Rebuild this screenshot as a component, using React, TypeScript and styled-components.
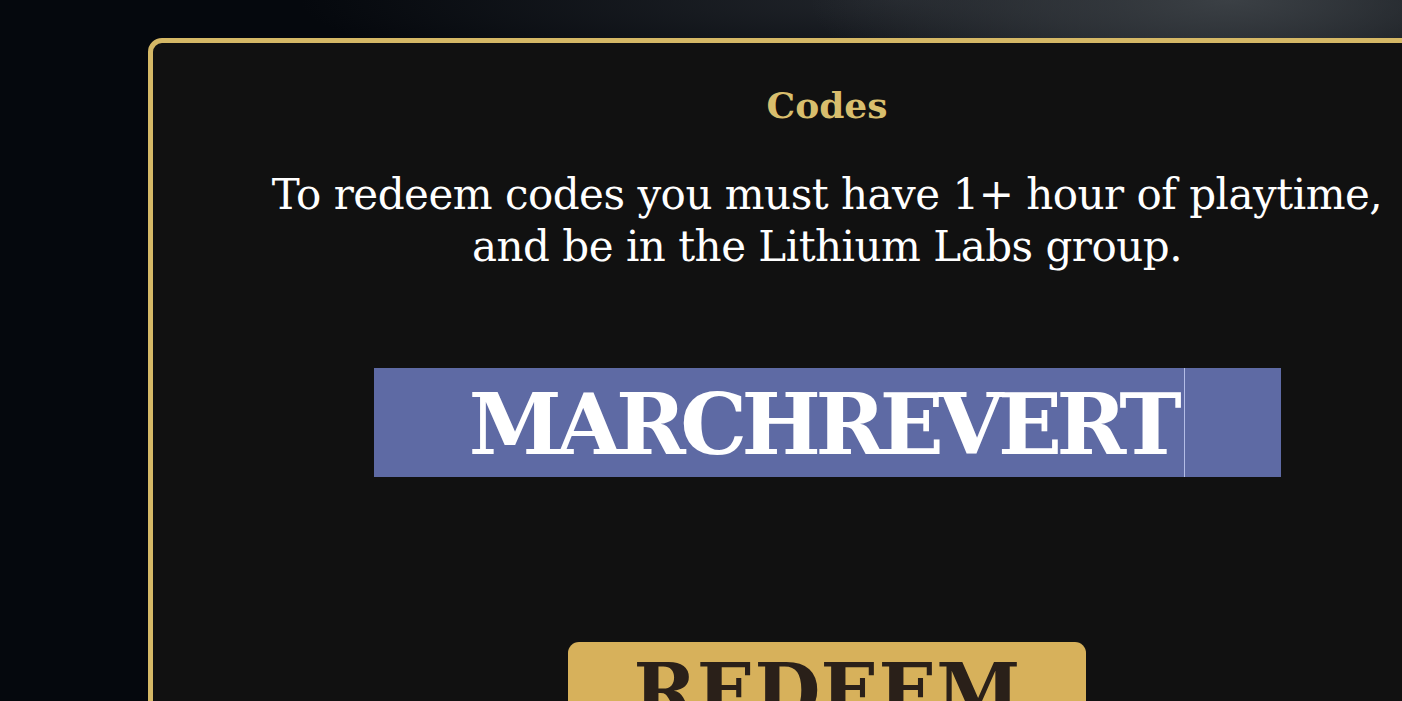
import React from "react";
import styled, { createGlobalStyle } from "styled-components";

const GlobalStyle = createGlobalStyle`
  html, body {
    margin: 0;
    padding: 0;
    height: 100%;
    overflow: hidden;
  }
  body {
    background:
      radial-gradient(ellipse 420px 120px at 1230px 0px, #3b4045 0%, rgba(59, 64, 69, 0.6) 45%, rgba(20, 24, 30, 0) 100%),
      radial-gradient(ellipse 600px 90px at 900px 0px, rgba(40, 44, 50, 0.8) 0%, rgba(20, 24, 30, 0) 100%),
      #05080d;
    font-family: "DejaVu Serif", "Liberation Serif", serif;
  }
`;

const Page = styled.div`
  width: 1402px;
  height: 701px;
  padding-top: 38px;
  padding-left: 148px;
  box-sizing: border-box;
`;

const Panel = styled.section`
  width: 1358px;
  height: 800px;
  box-sizing: border-box;
  border: 5px solid #d5b866;
  border-radius: 14px;
  background: #111111;
  display: flex;
  flex-direction: column;
  align-items: center;
  padding-top: 40px;
`;

const Title = styled.h2`
  margin: 0;
  color: #d8be6d;
  font-family: "DejaVu Serif", serif;
  font-weight: 700;
  font-size: 36px;
  line-height: 44px;
`;

const Notice = styled.p`
  margin: 42px 0 0;
  color: #ffffff;
  font-family: "DejaVu Serif", serif;
  font-size: 42px;
  line-height: 52px;
  text-align: center;
  letter-spacing: -0.5px;
`;

const CodeField = styled.div`
  margin-top: 95px;
  width: 907px;
  height: 109px;
  background: #5e6aa4;
  display: flex;
  align-items: center;
  justify-content: center;
`;

const CodeText = styled.span`
  color: #ffffff;
  font-family: "DejaVu Serif", serif;
  font-weight: 700;
  font-size: 84px;
  line-height: 109px;
  letter-spacing: -5.5px;
  padding-top: 4px;
`;

const Caret = styled.span`
  display: inline-block;
  width: 1px;
  height: 109px;
  margin-left: 8px;
  background: #b4bde6;
`;

const RedeemButton = styled.button`
  margin-top: 165px;
  width: 518px;
  height: 120px;
  border: none;
  border-radius: 11px;
  background: #d7b15b;
  color: #2a2019;
  font-family: "DejaVu Serif", serif;
  font-weight: 700;
  font-size: 76px;
  line-height: 1;
  letter-spacing: 0;
  display: flex;
  justify-content: center;
  align-items: flex-start;
  padding-top: 12px;
`;

const App: React.FC = () => {
  return (
    <>
      <GlobalStyle />
      <Page>
        <Panel>
          <Title>Codes</Title>
          <Notice>
            To redeem codes you must have 1+ hour of playtime,
            <br />
            and be in the Lithium Labs group.
          </Notice>
          <CodeField>
            <CodeText>MARCHREVERT</CodeText>
            <Caret />
          </CodeField>
          <RedeemButton>REDEEM</RedeemButton>
        </Panel>
      </Page>
    </>
  );
};

export default App;
